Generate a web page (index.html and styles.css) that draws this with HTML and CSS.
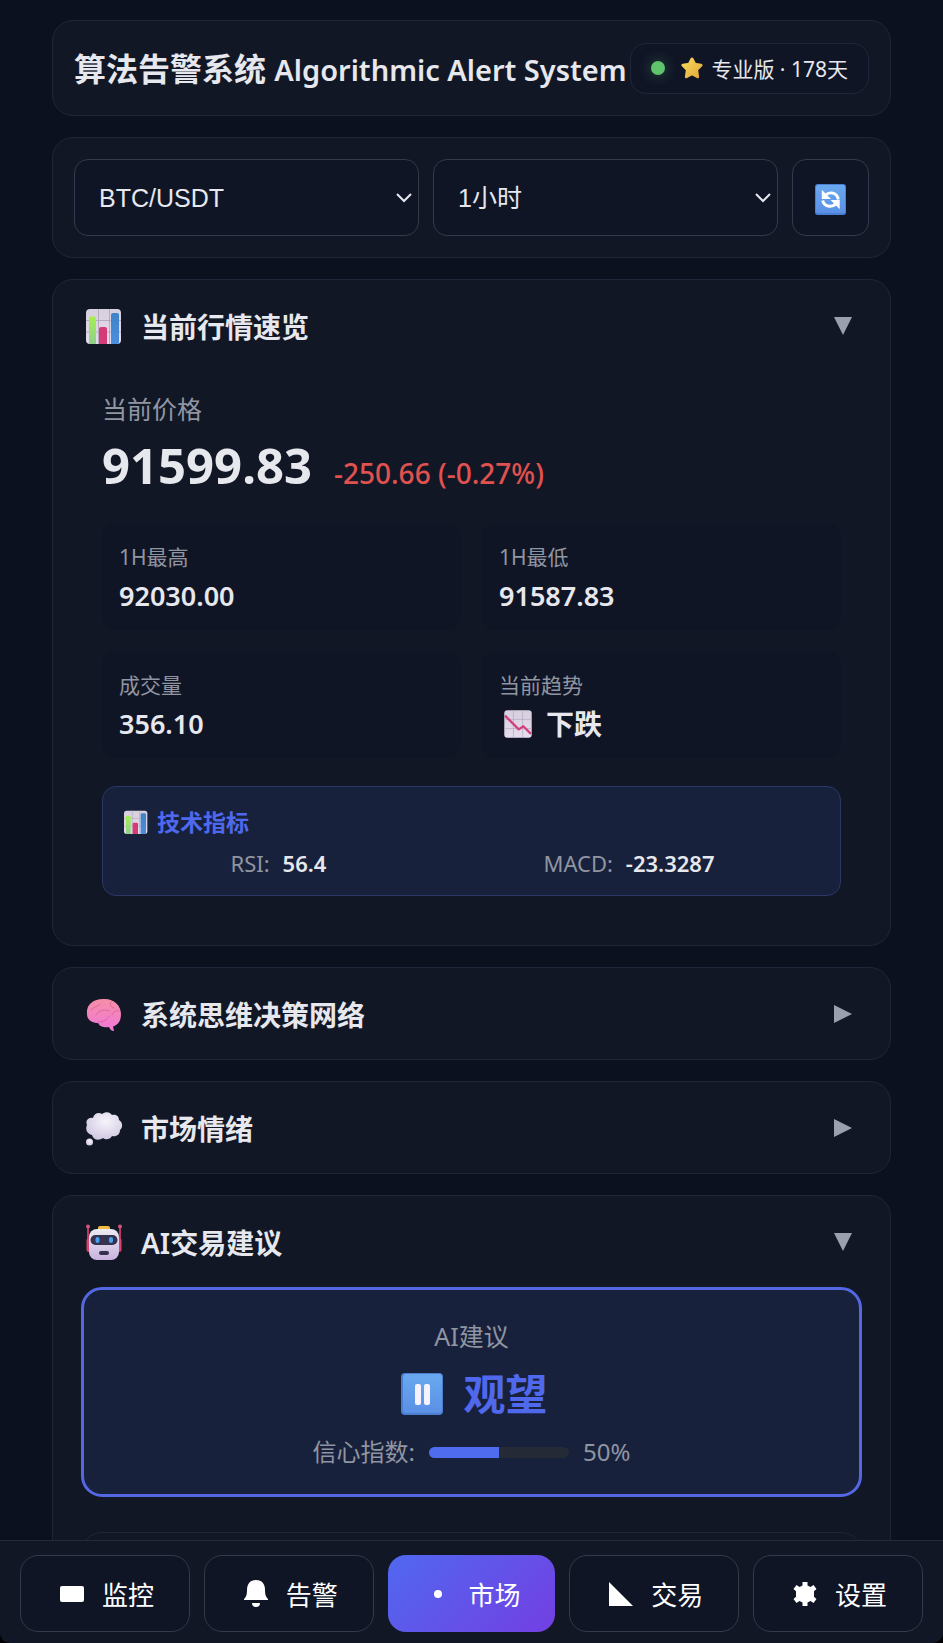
FILE: index.html
```html
<!DOCTYPE html>
<html lang="zh-CN">
<head>
  <meta charset="UTF-8">
  <meta name="viewport" content="width=device-width, initial-scale=1.0">
  <title>算法告警系统</title>
  <link rel="stylesheet" href="styles.css">
</head>
<body>
  <svg class="defs" aria-hidden="true">
    <defs>
      <linearGradient id="paper" x1="0" y1="0" x2="0" y2="1">
        <stop offset="0" stop-color="#d6cfdd"/><stop offset="1" stop-color="#e6dcee"/>
      </linearGradient>
      <linearGradient id="green" x1="0" y1="0" x2="0" y2="1">
        <stop offset="0" stop-color="#a5f04e"/><stop offset="1" stop-color="#8fd08c"/>
      </linearGradient>
      <linearGradient id="blue" x1="0" y1="0" x2="0" y2="1">
        <stop offset="0" stop-color="#3f82c8"/><stop offset="1" stop-color="#4a8ee0"/>
      </linearGradient>
      <linearGradient id="key" x1="0" y1="0" x2="0" y2="1">
        <stop offset="0" stop-color="#69a9ee"/><stop offset="1" stop-color="#5b90e6"/>
      </linearGradient>
      <linearGradient id="brain" x1="0" y1="0" x2="0" y2="1">
        <stop offset="0" stop-color="#f58fa6"/><stop offset="1" stop-color="#f177d8"/>
      </linearGradient>
      <linearGradient id="robot" x1="0" y1="0" x2="0" y2="1">
        <stop offset="0" stop-color="#eceaf2"/><stop offset="1" stop-color="#c9b3df"/>
      </linearGradient>
      <radialGradient id="cloud" cx=".55" cy=".35" r=".7">
        <stop offset="0" stop-color="#f6f4fb"/><stop offset="1" stop-color="#cfc6e0"/>
      </radialGradient>
      <linearGradient id="gold" x1="0" y1="0" x2="1" y2="1">
        <stop offset="0" stop-color="#f7d95c"/><stop offset="1" stop-color="#e2a93a"/>
      </linearGradient>
    </defs>
    <symbol id="icon-chart" viewBox="0 0 42 42">
      <rect x="3" y="4" width="35" height="35" rx="4" fill="url(#paper)"/>
      <path d="M3 15.500h35M3 27h35M15.500 4v35M26.500 4v35" stroke="#b5a9c0" fill="none"/>
      <path d="M6 13.500a2 2 0 0 1 2-2h3a2 2 0 0 1 2 2V39H7a4 4 0 0 1-1-.2z" fill="url(#green)"/>
      <path d="M16 24a2 2 0 0 1 2-2h4a2 2 0 0 1 2 2v15h-8z" fill="#d63b78"/>
      <path d="M28 10a2 2 0 0 1 2-2h4a2 2 0 0 1 2 2v28.500l-2 .5h-6z" fill="url(#blue)"/>
    </symbol>
    <symbol id="icon-down" viewBox="0 0 42 42">
      <rect x="3" y="3" width="36" height="36" rx="4" fill="url(#paper)"/>
      <path d="M3 15h36M3 27h36M15 3v36M27 3v36" stroke="#b9acc6" fill="none"/>
      <path d="M4 10l18 18 6-4 10 10" stroke="#d2427a" stroke-width="3" fill="none" stroke-linejoin="round"/>
    </symbol>
    <symbol id="icon-brain" viewBox="0 0 42 42">
      <path d="M4 21C3 12 10 6 20 6c10-1 18 6 18 15 0 7-3 11-8 12.500l1 4.500c-3 0-4-2-5-4-5 1-9 0-11-4C9 30 4 27 4 21z" fill="url(#brain)"/>
      <path d="M8 17c3-4 8-3 9-6M13 22c2-5 9-6 14-4M28 9c-2 3 0 5 3 6M36 18c-4-1-6 1-7 4" stroke="#dd6b96" fill="none" stroke-linecap="round"/>
      <path d="M15 29c6 0 9-2 11-6" stroke="#dc62bb" fill="none" stroke-linecap="round"/>
    </symbol>
    <symbol id="icon-thought" viewBox="0 0 42 42">
      <path d="M9 28c-5-1-7-6-5-10-2-5 2-8 6-7 1-5 6-6 9-4 4-3 8-2 10 1 5-1 7 2 7 5 4 2 4 8 1 10 0 5-4 7-8 6-2 4-7 4-9 2-4 3-10 2-11-3z" fill="url(#cloud)"/>
      <circle cx="6.500" cy="35" r="3.500" fill="url(#cloud)"/>
    </symbol>
    <symbol id="icon-robot" viewBox="0 0 42 42">
      <path d="M5 7v16M37 7v16" stroke="#b93a5c" stroke-width="2"/>
      <circle cx="5" cy="5.500" r="2" fill="#d0567a"/><circle cx="37" cy="5.500" r="2" fill="#d0567a"/>
      <rect x="3.500" y="17" width="5" height="14" rx="2.500" fill="#d9426b"/>
      <rect x="33.500" y="17" width="5" height="14" rx="2.500" fill="#d9426b"/>
      <rect x="15" y="5" width="12" height="6" rx="2" fill="#f2bd3c"/>
      <rect x="6" y="8" width="30" height="31" rx="8" fill="url(#robot)"/>
      <rect x="7.500" y="14" width="27" height="10" rx="5" fill="#35314f"/>
      <rect x="12.500" y="16" width="4" height="6" rx="2" fill="#48a0f0"/>
      <rect x="26" y="16" width="4" height="6" rx="2" fill="#48a0f0"/>
      <rect x="16" y="30" width="10" height="4" rx="2" fill="#35314f"/>
    </symbol>
    <symbol id="icon-pause" viewBox="0 0 42 42">
      <rect width="42" height="42" rx="4" fill="#4a7fd0"/>
      <rect x="2" y="1" width="39" height="39" rx="3" fill="url(#key)"/>
      <rect x="14" y="11" width="6" height="21" rx="2" fill="#f4f2fc"/>
      <rect x="23" y="11" width="6" height="21" rx="2" fill="#f4f2fc"/>
    </symbol>
    <symbol id="icon-refresh" viewBox="0 0 32 32">
      <rect width="32" height="32" rx="3" fill="#4a7fd6"/>
      <rect x="1" y="1" width="30" height="29" rx="2" fill="url(#key)"/>
      <path d="M10.500 12C15 7 23 9 24 16M21.500 20.500C17 25 9 23 8 17" stroke="#fff" stroke-width="3" fill="none"/>
      <path d="M7 6v9.500h9.500zM25.500 26v-9.500H16z" fill="#fff"/>
    </symbol>
    <symbol id="icon-star" viewBox="0 0 22 22">
      <path d="M11 2l2.700 5.300 6.300.9-4.400 4.600 1 7-5.600-3-5.600 3 1-7L2 8.200l6.300-.9z" fill="url(#gold)" stroke="url(#gold)" stroke-width="3" stroke-linejoin="round"/>
    </symbol>
  </svg>

  <div class="app">
    <main class="content">
      <div class="container">
        <header class="card header">
          <h1>算法告警系统 <span class="en">Algorithmic Alert System</span></h1>
          <div class="status">
            <span class="dot"></span>
            <svg class="star"><use href="#icon-star"/></svg>
            <span>专业版 · 178天</span>
          </div>
        </header>

        <section class="card controls">
          <div class="select-wrap">
            <select aria-label="交易对">
              <option>BTC/USDT</option>
            </select>
            <svg class="chevron" viewBox="0 0 16 10"><path d="M1 1l7 7 7-7"/></svg>
          </div>
          <div class="select-wrap">
            <select aria-label="时间周期">
              <option>1小时</option>
            </select>
            <svg class="chevron" viewBox="0 0 16 10"><path d="M1 1l7 7 7-7"/></svg>
          </div>
          <button class="refresh" aria-label="刷新">
            <svg><use href="#icon-refresh"/></svg>
          </button>
        </section>

        <section class="card">
          <button class="card-head" aria-expanded="true">
            <svg class="icon"><use href="#icon-chart"/></svg>
            <span class="card-title">当前行情速览</span>
            <svg class="caret" viewBox="0 0 18 18"><path d="M0 0h18L9 18z"/></svg>
          </button>
          <div class="market">
            <div class="label">当前价格</div>
            <div class="price-row">
              <span class="price">91599.83</span>
              <span class="change">-250.66 (-0.27%)</span>
            </div>
            <div class="stats">
              <div class="stat">
                <div class="stat-label">1H最高</div>
                <div class="stat-value">92030.00</div>
              </div>
              <div class="stat">
                <div class="stat-label">1H最低</div>
                <div class="stat-value">91587.83</div>
              </div>
              <div class="stat">
                <div class="stat-label">成交量</div>
                <div class="stat-value">356.10</div>
              </div>
              <div class="stat">
                <div class="stat-label">当前趋势</div>
                <div class="stat-value trend">
                  <svg><use href="#icon-down"/></svg>
                  <span>下跌</span>
                </div>
              </div>
            </div>
            <div class="tech">
              <div class="tech-title">
                <svg><use href="#icon-chart"/></svg>
                <span>技术指标</span>
              </div>
              <div class="tech-row">
                <div class="tech-item"><span>RSI:</span><b>56.4</b></div>
                <div class="tech-item"><span>MACD:</span><b>-23.3287</b></div>
              </div>
            </div>
          </div>
        </section>

        <section class="card">
          <button class="card-head" aria-expanded="false">
            <svg class="icon"><use href="#icon-brain"/></svg>
            <span class="card-title">系统思维决策网络</span>
            <svg class="caret" viewBox="0 0 18 18"><path d="M0 0v18l18-9z"/></svg>
          </button>
        </section>

        <section class="card">
          <button class="card-head" aria-expanded="false">
            <svg class="icon"><use href="#icon-thought"/></svg>
            <span class="card-title">市场情绪</span>
            <svg class="caret" viewBox="0 0 18 18"><path d="M0 0v18l18-9z"/></svg>
          </button>
        </section>

        <section class="card">
          <button class="card-head" aria-expanded="true">
            <svg class="icon"><use href="#icon-robot"/></svg>
            <span class="card-title">AI交易建议</span>
            <svg class="caret" viewBox="0 0 18 18"><path d="M0 0h18L9 18z"/></svg>
          </button>
          <div class="advice">
            <div class="signal">
              <div class="label">AI建议</div>
              <div class="signal-main">
                <svg><use href="#icon-pause"/></svg>
                <span>观望</span>
              </div>
              <div class="confidence">
                <span>信心指数:</span>
                <div class="bar"><div class="bar-fill" style="width: 50%"></div></div>
                <span>50%</span>
              </div>
            </div>
            <div class="detail"></div>
          </div>
        </section>
      </div>
    </main>

    <nav class="nav">
      <button>
        <svg viewBox="0 0 24 24"><rect y="4" width="24" height="16" rx="2"/></svg>
        <span>监控</span>
      </button>
      <button>
        <svg viewBox="0 0 24 28"><path d="M12 0c6 0 9 4 9 10 0 5 1 7 3 9v1H0v-1c2-2 3-4 3-9C3 4 6 0 12 0zM8 23h8a4 4 0 0 1-8 0z"/></svg>
        <span>告警</span>
      </button>
      <button class="active">
        <svg viewBox="0 0 24 24"><circle cx="12" cy="12" r="4"/></svg>
        <span>市场</span>
      </button>
      <button>
        <svg viewBox="0 0 24 24"><path d="M0 0v24h24z"/></svg>
        <span>交易</span>
      </button>
      <button>
        <svg viewBox="0 0 24 24"><path d="M9.500 0h5v3.500l3 1.500 3-2 3 4-2.500 2.300v5.400L23.500 17l-3 4-3-2-3 1.500V24h-5v-3.500l-3-1.500-3 2-3-4L3 14.700V9.300L.5 7l3-4 3 2 3-1.500z"/></svg>
        <span>设置</span>
      </button>
    </nav>
  </div>
</body>
</html>
```
FILE: styles.css
```css
* {
  box-sizing: border-box;
}

body {
  margin: 0;
  background: #000;
  color: #e6e8ee;
  font-family: "Noto Sans", "Noto Sans CJK SC", sans-serif;
}

button,
select {
  font-family: inherit;
  color: inherit;
}

button {
  cursor: pointer;
}

.defs {
  position: absolute;
  width: 0;
  height: 0;
}

.app {
  display: flex;
  flex-direction: column;
  height: 100vh;
  overflow: hidden;
  border-radius: 0 0 10px 10px;
  background: #0b111e;
}

.content {
  flex: 1;
  min-height: 0;
  overflow-y: auto;
  scrollbar-width: none;
  padding: 20px 14px;
}

.container {
  display: flex;
  flex-direction: column;
  gap: 21px;
  max-width: 839px;
  margin: 0 auto;
}

.card {
  background: #121726;
  border: 1px solid #20263a;
  border-radius: 21px;
}

/* header */
.header {
  display: flex;
  align-items: center;
  justify-content: space-between;
  padding: 21px;
}

h1 {
  margin: 0;
  padding-top: 3px;
  font-size: 32px;
  font-weight: 600;
  line-height: 48px;
  white-space: nowrap;
}

.en {
  font-size: 29px;
}

.status {
  display: flex;
  align-items: center;
  gap: 8px;
  height: 51px;
  padding: 0 20px;
  border: 1px solid #20263a;
  border-radius: 16px;
  background: #101526;
  font-size: 21px;
  white-space: nowrap;
}

.dot {
  width: 14px;
  height: 14px;
  margin-right: 8px;
  border-radius: 50%;
  background: #5fc56c;
  box-shadow: 0 0 14px rgba(95, 197, 108, 0.4);
}

.star {
  width: 22px;
  height: 22px;
}

/* controls */
.controls {
  display: flex;
  gap: 14px;
  padding: 21px;
}

.select-wrap {
  position: relative;
  flex: 1;
}

select {
  appearance: none;
  width: 100%;
  height: 77px;
  padding: 0 24px;
  border: 1px solid #343a4b;
  border-radius: 14px;
  background: #101526;
  font-family: "Liberation Sans", "Noto Sans CJK SC", sans-serif;
  font-size: 25px;
}

.chevron {
  position: absolute;
  top: 34px;
  right: 7px;
  width: 16px;
  height: 10px;
  fill: none;
  stroke: #e6e8ee;
  stroke-width: 2;
  pointer-events: none;
}

.refresh {
  display: flex;
  align-items: center;
  justify-content: center;
  width: 77px;
  height: 77px;
  padding: 4px 0 0;
  border: 1px solid #343a4b;
  border-radius: 14px;
  background: #101526;
}

.refresh svg {
  width: 31px;
  height: 31px;
}

/* collapsible cards */
.card-head {
  display: flex;
  align-items: center;
  gap: 16px;
  width: 100%;
  height: 91px;
  padding: 0 38px 0 30px;
  border: 0;
  background: none;
  text-align: left;
}

.icon {
  width: 42px;
  height: 42px;
}

.card-title {
  flex: 1;
  font-size: 28px;
  font-weight: 600;
}

.caret {
  width: 18px;
  height: 18px;
  fill: #9aa0ad;
}

.label {
  color: #9095a2;
  font-size: 25px;
  line-height: 36px;
}

.market {
  padding: 20px 49px 49px;
}

.price-row {
  display: flex;
  align-items: baseline;
  gap: 22px;
  margin: 8px 0 20px;
  line-height: 60px;
}

.price {
  font-size: 49px;
  font-weight: 700;
}

.change {
  color: #e0524f;
  font-size: 28px;
  font-weight: 500;
}

.stats {
  display: grid;
  grid-template-columns: 1fr 1fr;
  gap: 21px;
  margin-bottom: 28px;
}

.stat {
  height: 107px;
  padding: 17px;
  border-radius: 14px;
  background: #101526;
}

.stat-label {
  color: #9095a2;
  font-size: 21px;
  line-height: 34px;
}

.stat-value {
  font-size: 27px;
  font-weight: 600;
  line-height: 44px;
}

.trend {
  display: flex;
  align-items: center;
  gap: 12px;
  padding-left: 3px;
  font-size: 28px;
}

.trend svg {
  width: 32px;
  height: 32px;
}

.tech {
  padding: 17px 17px 15px 19px;
  border: 1px solid #2b3767;
  border-radius: 14px;
  background: #18213b;
}

.tech-title {
  display: flex;
  align-items: center;
  gap: 7px;
  color: #4f69ee;
  font-size: 23px;
  font-weight: 700;
  line-height: 36px;
}

.tech-title svg {
  width: 28px;
  height: 28px;
}

.tech-row {
  display: flex;
  justify-content: space-around;
  margin-top: 6px;
  font-size: 22px;
  line-height: 34px;
}

.tech-item {
  display: flex;
  gap: 13px;
}

.tech-item span {
  color: #9095a2;
}

.tech-item b {
  font-weight: 600;
}

/* AI advice */
.advice {
  padding: 0 28px 28px;
}

.signal {
  display: flex;
  flex-direction: column;
  align-items: center;
  gap: 10px;
  padding: 28px 28px 24px;
  border: 3px solid #5468e4;
  border-radius: 21px;
  background: #18213b;
}

.signal-main {
  display: flex;
  align-items: center;
  gap: 20px;
  padding-left: 6px;
  color: #5068ec;
  font-size: 42px;
  font-weight: 700;
  line-height: 60px;
}

.signal-main svg {
  width: 42px;
  height: 42px;
}

.confidence {
  display: flex;
  align-items: center;
  gap: 14px;
  color: #9095a2;
  font-size: 24px;
  line-height: 36px;
}

.bar {
  width: 140px;
  height: 11px;
  overflow: hidden;
  border-radius: 6px;
  background: #242a36;
}

.bar-fill {
  height: 100%;
  background: #4f6bee;
}

.detail {
  height: 140px;
  margin-top: 35px;
  border: 1px solid #20263a;
  border-radius: 21px;
}

/* bottom navigation */
.nav {
  display: flex;
  gap: 14px;
  padding: 14px 20px 11px;
  border-top: 1px solid #252b3b;
  background: #121726;
}

.nav button {
  display: flex;
  flex: 1;
  align-items: center;
  justify-content: center;
  gap: 18px;
  height: 77px;
  padding: 0 0 0 4px;
  border: 1px solid #343a4b;
  border-radius: 18px;
  background: #101526;
  color: #fff;
  font-size: 26px;
}

.nav button.active {
  border: 0;
  background: linear-gradient(135deg, #5068f0, #733fe2);
}

.nav svg {
  width: 24px;
  height: 28px;
  fill: currentColor;
}
```
